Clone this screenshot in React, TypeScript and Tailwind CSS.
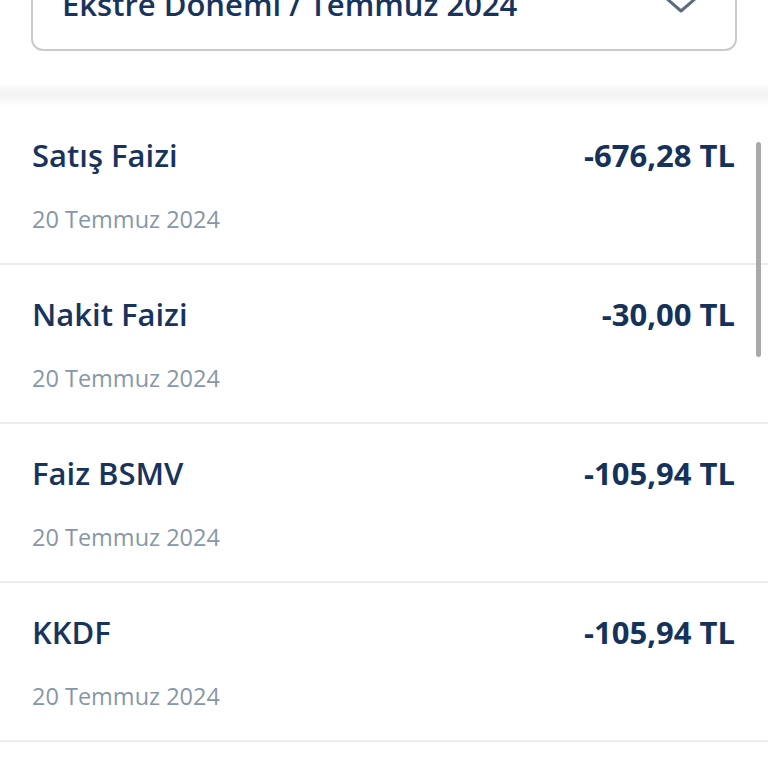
const rows = [
  { title: "Satış Faizi", amount: "-676,28 TL", date: "20 Temmuz 2024" },
  { title: "Nakit Faizi", amount: "-30,00 TL", date: "20 Temmuz 2024" },
  { title: "Faiz BSMV", amount: "-105,94 TL", date: "20 Temmuz 2024" },
  { title: "KKDF", amount: "-105,94 TL", date: "20 Temmuz 2024" },
  { title: "Kart Aidatı", amount: "-0,00 TL", date: "20 Temmuz 2024" },
];

const Row = ({ title, amount, date }: { title: string; amount: string; date: string }) => (
  <div className="border-b-2 border-[#ececec] pl-[32px] pr-[33px] pt-[29px] pb-[28px]">
    <div className="flex items-baseline justify-between">
      <span className="text-[31px] leading-[40px] font-semibold text-[#18345c]">{title}</span>
      <span className="text-[31px] leading-[40px] font-bold text-[#15325a]">{amount}</span>
    </div>
    <div className="mt-[28px] text-[23.5px] leading-[32px] text-[#8797a8]">{date}</div>
  </div>
);

export default function App() {
  return (
    <div
      className="relative h-[768px] w-[768px] overflow-hidden bg-white"
      style={{ fontFamily: '"Open Sans", "Noto Sans", sans-serif' }}
    >
      <div className="px-[31px]">
        <div className="-mt-[40px] flex items-center justify-between rounded-[12px] border-2 border-[#c8cbce] pl-[29px] pr-[36px] pt-[22px] pb-[25px]">
          <span className="text-[31px] leading-[40px] font-semibold text-[#18345c]">Ekstre Dönemi / Temmuz 2024</span>
          <svg width="36" height="20" viewBox="0 0 36 20" className="mt-[2px]">
            <path d="M3 3 L18 16 L33 3" fill="none" stroke="#5d6c7b" strokeWidth="3" strokeLinecap="round" strokeLinejoin="round" />
          </svg>
        </div>
      </div>

      <div className="mt-[32px] h-[23px] bg-gradient-to-b from-white via-[#f2f2f2] to-white" />

      <div>
        {rows.map((r, i) => (
          <Row key={i} {...r} />
        ))}
      </div>

      <div className="absolute left-[756px] top-[142px] h-[215px] w-[5px] rounded-full bg-[#a9a9a9]" />
    </div>
  );
}
